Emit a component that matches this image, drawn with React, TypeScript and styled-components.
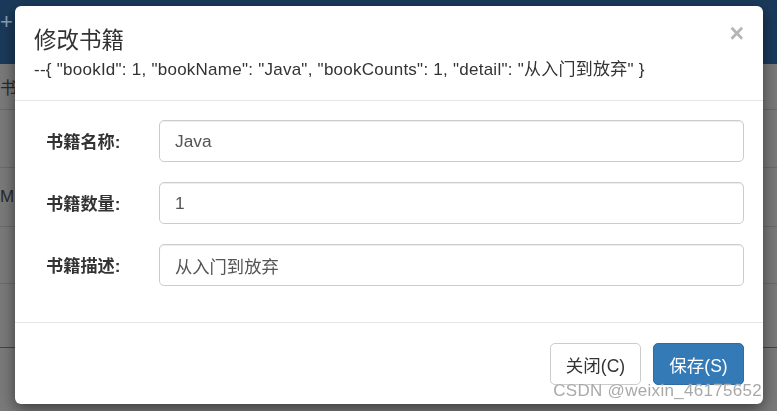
import React from "react";
import styled, { createGlobalStyle } from "styled-components";

const Global = createGlobalStyle`
  html, body { margin: 0; padding: 0; }
  body {
    width: 777px; height: 411px; overflow: hidden;
    font-family: "Liberation Sans", Arial, "Noto Sans CJK SC", sans-serif;
    background: #787878;
  }
`;

const Page = styled.div`
  width: 777px;
  height: 411px;
  display: flex;
  flex-direction: column;
  background: #7a7a7a;
  overflow: hidden;
`;

const NavBar = styled.div`
  height: 64px;
  flex: none;
  background: #1b3a5b;
  display: flex;
  align-items: center;
  color: #8ea0b3;
  font-size: 22px;
  padding-bottom: 20px;
  box-sizing: border-box;
`;

const TableRow = styled.div<{ $h: number; $line?: string }>`
  height: ${(p) => p.$h}px;
  flex: none;
  border-bottom: 1px solid ${(p) => p.$line || "#6b6b6b"};
  display: flex;
  align-items: center;
  color: #2a2a2a;
  font-size: 17px;
  box-sizing: border-box;
`;

const Overlay = styled.div`
  position: fixed;
  inset: 0;
  display: flex;
  justify-content: flex-start;
  align-items: flex-start;
  padding: 6px 0 0 15px;
`;

const Modal = styled.div`
  width: 748px;
  height: 398px;
  background: #fff;
  border-radius: 6px;
  box-shadow: 0 5px 15px rgba(0, 0, 0, 0.5);
  display: flex;
  flex-direction: column;
  overflow: hidden;
`;

const Header = styled.div`
  position: relative;
  padding: 18px 20px 0 19px;
  height: 95px;
  flex: none;
  border-bottom: 1px solid #e5e5e5;
  box-sizing: border-box;
`;

const Title = styled.h4`
  margin: 0;
  font-weight: 400;
  font-size: 22.5px;
  line-height: 34px;
  color: #333;
`;

const Sub = styled.div`
  font-size: 17px;
  letter-spacing: 0.25px;
  line-height: 20px;
  color: #333;
  margin-top: 2px;
  white-space: nowrap;
`;

const CloseX = styled.span`
  position: absolute;
  right: 19px;
  top: 15px;
  font-size: 25px;
  font-weight: 700;
  color: #b5b5b5;
  line-height: 1;
`;

const Body = styled.div`
  flex: 1;
  padding: 19px 19px 0 31px;
  display: flex;
  flex-direction: column;
  gap: 20px;
  border-bottom: 1px solid #e5e5e5;
`;

const FormRow = styled.div`
  display: flex;
  align-items: center;
`;

const Label = styled.label`
  width: 113px;
  flex: none;
  font-weight: 700;
  font-size: 17.2px;
  color: #333;
  margin-top: -2px;
`;

const Input = styled.div`
  flex: 1;
  height: 42px;
  box-sizing: border-box;
  border: 1px solid #ccc;
  border-radius: 5px;
  padding: 0 15px;
  display: flex;
  align-items: center;
  font-size: 17.3px;
  color: #555;
  box-shadow: inset 0 1px 1px rgba(0, 0, 0, 0.075);
`;

const Footer = styled.div`
  height: 81px;
  flex: none;
  box-sizing: border-box;
  padding: 20px 19px 0 0;
  display: flex;
  justify-content: flex-end;
  align-items: flex-start;
  gap: 12px;
  position: relative;
`;

const Button = styled.button<{ $primary?: boolean }>`
  width: 91px;
  height: 42px;
  border-radius: 5px;
  font-family: inherit;
  font-size: 17.5px;
  border: 1px solid ${(p) => (p.$primary ? "#2e6da4" : "#ccc")};
  background: ${(p) => (p.$primary ? "#337ab7" : "#fff")};
  color: ${(p) => (p.$primary ? "#fff" : "#333")};
  padding: 0;
`;

const Watermark = styled.div`
  position: fixed;
  right: 15px;
  bottom: 10px;
  font-size: 17px;
  color: #a9a9a9;
  letter-spacing: 0.3px;
  text-shadow: 0 0 1px #fff;
  white-space: nowrap;
`;

export default function App() {
  return (
    <>
      <Global />
      <Page>
        <NavBar>+</NavBar>
        <TableRow $h={46}>书</TableRow>
        <TableRow $h={58}></TableRow>
        <TableRow $h={59}>M</TableRow>
        <TableRow $h={57}></TableRow>
        <TableRow $h={64} $line="#2d4a68"></TableRow>
      </Page>
      <Overlay>
        <Modal>
          <Header>
            <CloseX>×</CloseX>
            <Title>修改书籍</Title>
            <Sub>--{'{'} "bookId": 1, "bookName": "Java", "bookCounts": 1, "detail": "从入门到放弃" {'}'}</Sub>
          </Header>
          <Body>
            <FormRow>
              <Label>书籍名称:</Label>
              <Input>Java</Input>
            </FormRow>
            <FormRow>
              <Label>书籍数量:</Label>
              <Input>1</Input>
            </FormRow>
            <FormRow>
              <Label>书籍描述:</Label>
              <Input>从入门到放弃</Input>
            </FormRow>
          </Body>
          <Footer>
            <Button>关闭(C)</Button>
            <Button $primary>保存(S)</Button>
          </Footer>
        </Modal>
      </Overlay>
      <Watermark>CSDN @weixin_46175652</Watermark>
    </>
  );
}
